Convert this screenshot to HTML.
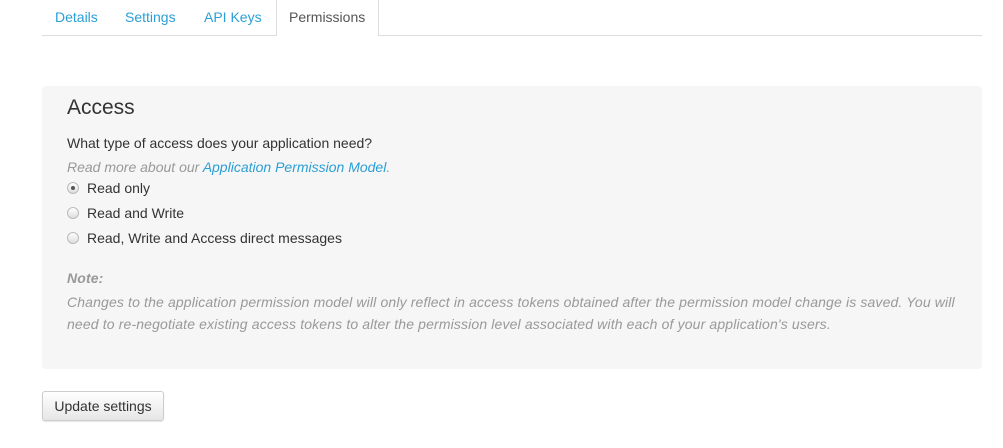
<!DOCTYPE html>
<html><head><style>
body{margin:0;width:1003px;height:448px;background:#fff;font-family:"Liberation Sans",sans-serif;font-size:14px;color:#333;position:relative;overflow:hidden}
.abs{position:absolute;white-space:nowrap}
.tabs{position:absolute;left:42px;top:0;width:940px;height:35px;border-bottom:1px solid #ddd}
.tab{position:absolute;top:9px;color:#2a9fd6;font-size:14px}
.act{position:absolute;left:276px;top:0;width:101px;height:36px;background:#fff;border:1px solid #ddd;border-top:none;border-bottom:none}
.panel{position:absolute;left:42px;top:86px;width:940px;height:283px;background:#f6f6f6;border-radius:4px}
.r{position:absolute;left:67px;width:10px;height:10px;border:1px solid #bbb;border-radius:50%;background:linear-gradient(#fff,#ddd)}
.it{font-style:italic;color:#999;letter-spacing:0.14px}
.btn{position:absolute;left:42px;top:391px;width:120px;height:28px;border:1px solid #ccc;border-radius:3px;background:linear-gradient(#fff,#e6e6e6);box-shadow:0 1px 1px rgba(0,0,0,.1);text-align:center;line-height:28px;color:#333}
</style></head><body>
<div class="tabs"></div>
<div class="act"></div>
<div class="tab" style="left:55px">Details</div>
<div class="tab" style="left:125px">Settings</div>
<div class="tab" style="left:204px">API Keys</div>
<div class="tab" style="left:289px;color:#555">Permissions</div>
<div class="panel"></div>
<div class="abs" style="left:67px;top:96px;font-size:21px;color:#333">Access</div>
<div class="abs" style="left:67px;top:135px">What type of access does your application need?</div>
<div class="abs it" style="left:67px;top:159px;letter-spacing:0">Read more about our <span style="color:#2a9fd6">Application Permission Model</span>.</div>
<div class="r" style="top:182px"><div style="position:absolute;left:3px;top:3px;width:4px;height:4px;border-radius:50%;background:#555"></div></div>
<div class="abs" style="left:87px;top:180px">Read only</div>
<div class="r" style="top:207px"></div>
<div class="abs" style="left:87px;top:205px">Read and Write</div>
<div class="r" style="top:232px"></div>
<div class="abs" style="left:87px;top:230px">Read, Write and Access direct messages</div>
<div class="abs it" style="left:67px;top:270px;font-weight:bold">Note:</div>
<div class="abs it" style="left:67px;top:294px">Changes to the application permission model will only reflect in access tokens obtained after the permission model change is saved. You will</div>
<div class="abs it" style="left:67px;top:316px">need to re-negotiate existing access tokens to alter the permission level associated with each of your application's users.</div>
<div class="btn">Update settings</div>
</body></html>
